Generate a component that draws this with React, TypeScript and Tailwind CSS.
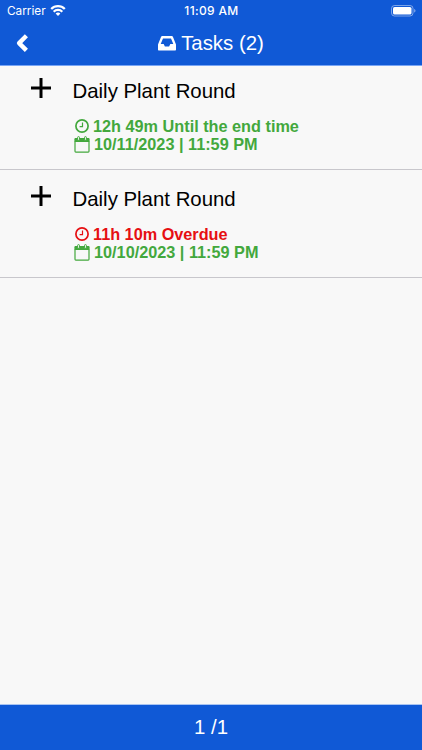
type Task = {
  title: string;
  status: string;
  overdue: boolean;
  due: string;
};

const TASKS: Task[] = [
  {
    title: "Daily Plant Round",
    status: "12h 49m Until the end time",
    overdue: false,
    due: "10/11/2023 | 11:59 PM",
  },
  {
    title: "Daily Plant Round",
    status: "11h 10m Overdue",
    overdue: true,
    due: "10/10/2023 | 11:59 PM",
  },
];

function WifiIcon() {
  return (
    <svg viewBox="0 0 16 12" className="h-[12px] w-[16px]" fill="none" stroke="currentColor" strokeWidth="2.300">
      <path d="M1.200 4a9.700 9.700 0 0113.600 0" />
      <path d="M3.700 6.700a6.100 6.100 0 018.600 0" />
      <path d="M8 11.100L5.600 8.600a3.400 3.400 0 014.800 0z" fill="currentColor" stroke="none" />
    </svg>
  );
}

function BatteryIcon() {
  return (
    <svg viewBox="0 0 26 12" className="h-[12px] w-[26px]">
      <rect x="1.500" y="0.500" width="21.500" height="10.500" rx="3" fill="none" stroke="#fff" strokeOpacity="0.45" />
      <rect x="3" y="2" width="18.500" height="7.500" rx="1.600" fill="#fff" />
      <path d="M24.200 4v3.600c.8-.3 1.300-1 1.300-1.800S25 4.300 24.200 4z" fill="#fff" fillOpacity="0.5" />
    </svg>
  );
}

function BackIcon() {
  return (
    <svg viewBox="0 0 14 20" className="h-[20px] w-[14px]" fill="none" stroke="#fff" strokeWidth="4.400" strokeLinejoin="round">
      <path d="M11.400 1.800L4.100 9.100l7.300 7.300" />
    </svg>
  );
}

function InboxIcon() {
  return (
    <svg viewBox="0 0 18 15" className="h-[15px] w-[18px]" fill="#fff">
      <path
        fillRule="evenodd"
        d="M4.200 0h9.600c.5 0 .9.300 1.100.700L17.700 7.700c.2.400.300.800.300 1.200V13.600c0 .6-.4 1-1 1H1c-.6 0-1-.4-1-1V8.900c0-.4.100-.8.300-1.200L3.100.700C3.300.300 3.700 0 4.200 0zM5 2.400L2.700 8.100h3l1.200 2.400h4.200l1.200-2.400h3L13 2.400z"
      />
    </svg>
  );
}

function PlusIcon() {
  return (
    <svg viewBox="0 0 20 20" className="h-[20px] w-[20px]" stroke="#000" strokeWidth="3">
      <path d="M10 0v20M0 10h20" />
    </svg>
  );
}

function ClockIcon() {
  return (
    <svg viewBox="0 0 14 14" className="h-[14px] w-[14px]" fill="none" stroke="currentColor">
      <circle cx="7" cy="7" r="6.100" strokeWidth="1.700" />
      <path d="M7.500 3.500v4.200H4.600" strokeWidth="1.200" />
    </svg>
  );
}

function CalendarIcon() {
  return (
    <svg viewBox="0 0 16 17" className="h-[17px] w-[16px]" fill="none" stroke="currentColor">
      <path d="M1 5.500h14v9.800a.8.8 0 01-.8.800H1.800a.8.8 0 01-.8-.800z" strokeWidth="1.200" />
      <path d="M.400 5.600V3.200c0-.7.500-1.200 1.200-1.200h12.800c.7 0 1.200.500 1.200 1.200v2.400z" fill="currentColor" stroke="none" />
      <rect x="3.600" y="0.600" width="1.900" height="3.700" rx="0.900" fill="#f8f8f8" strokeWidth="1" />
      <rect x="10.500" y="0.600" width="1.900" height="3.700" rx="0.900" fill="#f8f8f8" strokeWidth="1" />
    </svg>
  );
}

function TaskRow({ task }: { task: Task }) {
  return (
    <li className="flex h-[108px] border-b border-[#c8c7cc] pt-[16px] pl-[31px] first:h-[104px] first:pt-[12px]">
      <div className="w-[42px] shrink-0">
        <PlusIcon />
      </div>
      <div className="min-w-0 pt-px">
        <h2 className="-ml-[0.500px] text-[20.400px] leading-[24px] text-black">{task.title}</h2>
        <div className="mt-[14px] pl-[1.500px] text-[16.250px] leading-[18px] font-bold whitespace-nowrap text-[#43a83d]">
          <p className={`flex items-center gap-[4.500px] ${task.overdue ? "text-[#e60f12]" : ""}`}>
            <ClockIcon />
            {task.status}
          </p>
          <p className="-ml-[0.500px] flex h-[18px] items-center gap-[4px]">
            <CalendarIcon />
            {task.due}
          </p>
        </div>
      </div>
    </li>
  );
}

export default function App() {
  return (
    <div className="flex h-screen flex-col bg-[#f8f8f8] font-['Liberation_Sans',Arial,sans-serif]">
      <header className="h-[66px] shrink-0 border-b border-[#78a5f5] bg-[#1059d6] text-white">
        <div className="grid h-[22px] grid-cols-3 items-center pr-[6px] pl-[7px] font-['Inter',sans-serif] text-[12px]">
          <div className="flex items-center gap-[4px]">
            <span className="pt-px text-[11.800px]">Carrier</span>
            <WifiIcon />
          </div>
          <span className="text-center font-medium tracking-[0.350px]">11:09 AM</span>
          <div className="flex justify-end">
            <BatteryIcon />
          </div>
        </div>
        <div className="grid h-[43px] grid-cols-[40px_1fr_40px] items-center">
          <button className="pl-[15px]" aria-label="Back">
            <BackIcon />
          </button>
          <h1 className="flex items-center justify-center gap-[5px] text-[20.400px]">
            <InboxIcon />
            Tasks (2)
          </h1>
        </div>
      </header>

      <ul className="flex-1">
        {TASKS.map((task) => (
          <TaskRow key={task.due} task={task} />
        ))}
      </ul>

      <footer className="flex h-[46px] shrink-0 items-center justify-center border-t border-[#a9c4f2] bg-[#1059d6] text-[20.400px] text-white">
        1 /1
      </footer>
    </div>
  );
}
